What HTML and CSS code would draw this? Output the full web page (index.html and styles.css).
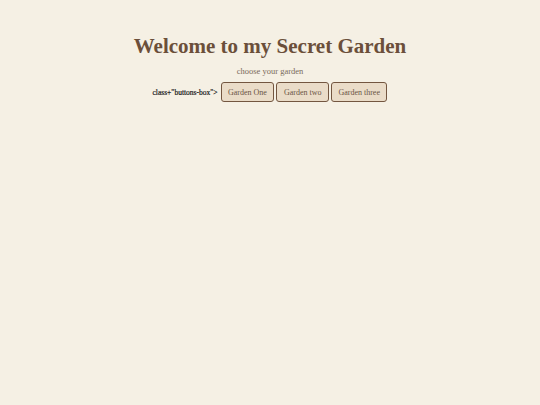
FILE: index.html
```html
<!DOCTYPE html>
<html>
<head>
<meta charset="utf-8">
<link rel="stylesheet" href="styles.css">
</head>
<body>
<div class="page">
  <h1 class="title">Welcome to my Secret Garden</h1>
  <p class="subtitle">choose your garden</p>
  <div class="row">
    <span class="stray">class+"buttons-box"&gt;</span>
    <button class="btn">Garden One</button>
    <button class="btn">Garden two</button>
    <button class="btn">Garden three</button>
  </div>
</div>
</body>
</html>
```
FILE: styles.css
```css
html, body {
  margin: 0;
  padding: 0;
  background: #f5f0e4;
}
body {
  font-family: "Liberation Serif", serif;
  width: 540px;
  height: 405px;
}
.page {
  display: flex;
  flex-direction: column;
  align-items: center;
  padding-top: 34px;
}
.title {
  margin: 0;
  font-size: 21px;
  font-weight: bold;
  color: #6b4f3a;
  line-height: 24px;
}
.subtitle {
  margin: 8px 0 0 0;
  font-size: 8.5px;
  line-height: 11px;
  color: #7a6a5a;
}
.row {
  margin-top: 5px;
  display: flex;
  align-items: center;
  gap: 2px;
}
.stray {
  font-size: 7.5px;
  color: #1a1a1a;
  margin-right: 1px;
  -webkit-text-stroke: 0.2px #1a1a1a;
}
.btn {
  font-family: "Liberation Serif", serif;
  font-size: 8px;
  color: #6b5545;
  background: #eadcc8;
  border: 1.5px solid #735640;
  border-radius: 3px;
  height: 20px;
  padding: 0 6.5px;
  margin: 0;
}
```
